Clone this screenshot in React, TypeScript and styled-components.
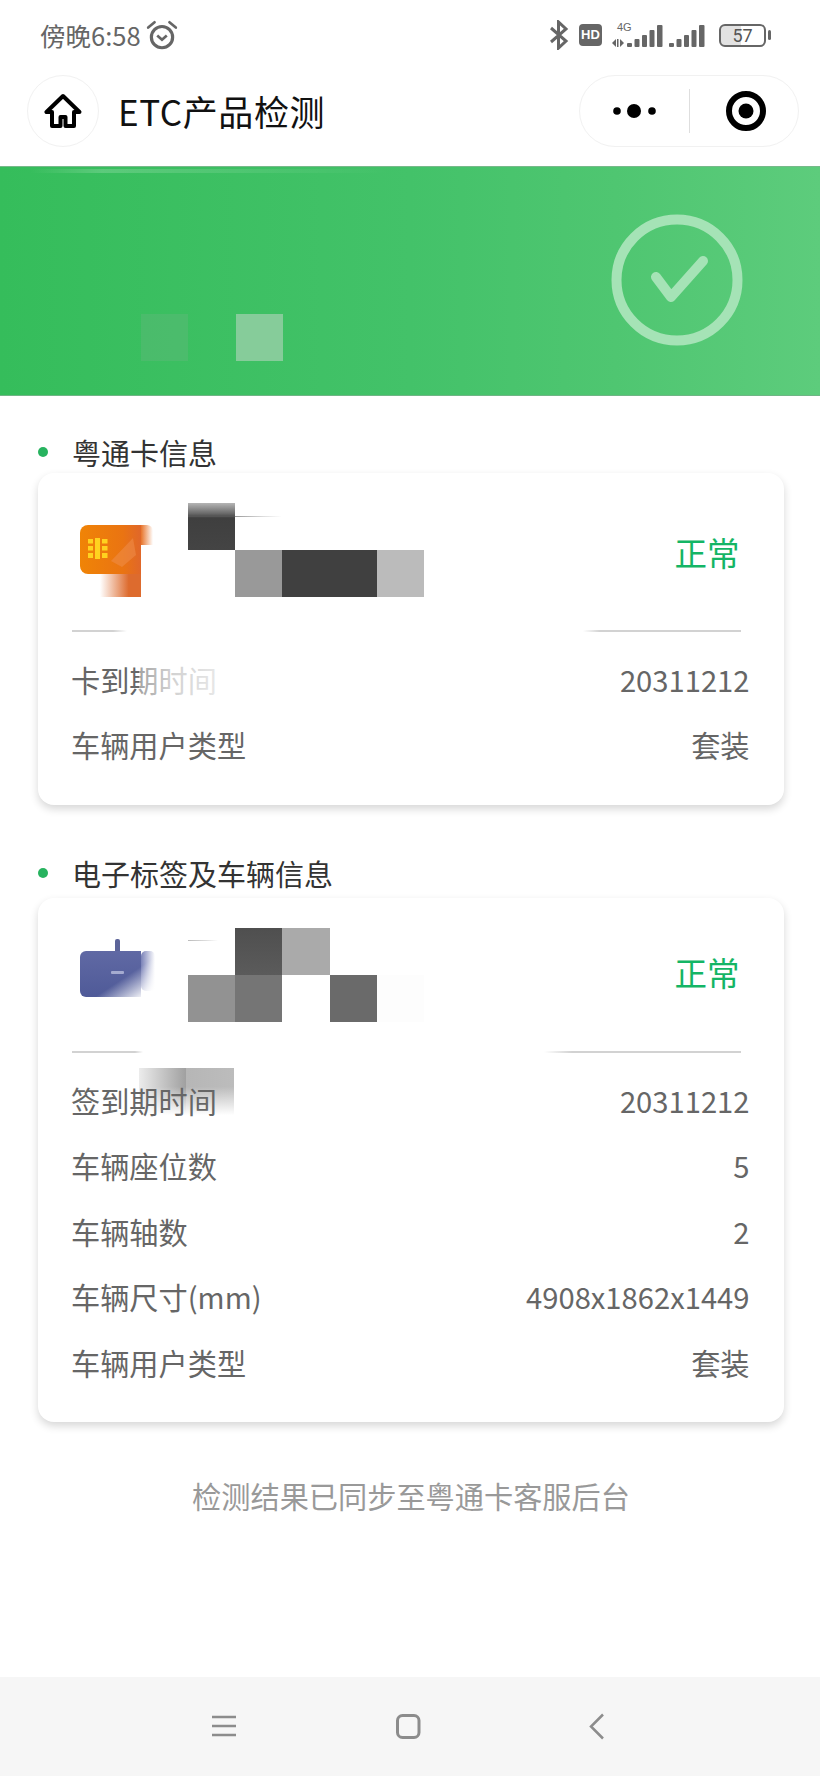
import React from "react";
import styled, { createGlobalStyle } from "styled-components";

const Global = createGlobalStyle`
  html, body { margin: 0; padding: 0; background: #fff; }
  body { font-family: "Noto Sans CJK SC", "Noto Sans", sans-serif; }
  * { box-sizing: border-box; }
`;

const Page = styled.div`
  width: 820px;
  height: 1776px;
  overflow: hidden;
  display: flex;
  flex-direction: column;
  background: #fff;
`;

const StatusBar = styled.div`
  height: 70px;
  padding: 0 54px 0 40px;
  display: flex;
  align-items: center;
  color: #666;
`;

const Clock = styled.span`
  font-size: 25.500px;
  line-height: 30px;
  font-family: "Noto Sans CJK SC", sans-serif;
`;

const AlarmIcon = styled.svg`
  width: 34px;
  height: 34px;
  margin-left: 4px;
`;

const StatusIcons = styled.div`
  margin-left: auto;
  display: flex;
  align-items: center;
`;

const BluetoothIcon = styled.svg`
  width: 20px;
  height: 30px;
`;

const HdBadge = styled.span`
  width: 23px;
  height: 22px;
  margin-left: 10px;
  border-radius: 4px;
  background: #666;
  color: #fff;
  font: 700 13px/22px "Liberation Sans", sans-serif;
  text-align: center;
`;

const SignalWrap = styled.div`
  position: relative;
  width: 51px;
  height: 26px;
  margin-left: 10px;
`;

const FourG = styled.span`
  position: absolute;
  left: 5px;
  top: -1px;
  font: 400 11px/12px "Liberation Sans", sans-serif;
  color: #666;
`;

const SignalIcon = styled.svg<{ $w: number }>`
  display: block;
  width: ${(p) => p.$w}px;
  height: 26px;
`;

const SecondSignal = styled.div`
  margin-left: 6px;
`;

const Battery = styled.div`
  position: relative;
  width: 47px;
  height: 23px;
  margin-left: 14px;
  border: 2px solid #666;
  border-radius: 6px;
  font: 400 18px/19px "Roboto", sans-serif;
  color: #555;
  text-align: center;
  background: linear-gradient(90deg, #e2e2e2 0 20px, transparent 20px);
  &::after {
    content: "";
    position: absolute;
    right: -7px;
    top: 4px;
    width: 3px;
    height: 10px;
    border-radius: 2px;
    background: #666;
  }
`;

const NavBar = styled.div`
  height: 96px;
  padding: 5px 21px 19px 27px;
  display: flex;
  align-items: center;
`;

const HomeButton = styled.div`
  width: 72px;
  height: 72px;
  border: 1px solid #f1f1f1;
  border-radius: 50%;
  display: flex;
  align-items: center;
  justify-content: center;
`;

const HomeIcon = styled.svg`
  width: 38px;
  height: 36px;
`;

const Title = styled.h1`
  margin: 0 0 0 19px;
  font-size: 35px;
  line-height: 44px;
  font-weight: 400;
  letter-spacing: 0.6px;
  color: #111;
`;

const Capsule = styled.div`
  margin-left: auto;
  width: 220px;
  height: 72px;
  border: 1px solid #f1f1f1;
  border-radius: 36px;
  display: flex;
  align-items: center;
`;

const CapsuleIcon = styled.svg<{ $w: number; $ml: number }>`
  width: ${(p) => p.$w}px;
  height: 44px;
  margin-left: ${(p) => p.$ml}px;
`;

const CapsuleLine = styled.div`
  width: 1px;
  height: 44px;
  margin-left: 32px;
  background: #dedede;
`;

const Banner = styled.div`
  height: 230px;
  position: relative;
  padding: 0 77px 0 141px;
  display: flex;
  align-items: flex-end;
  background: linear-gradient(90deg, #35bd5b 0%, #43c269 50%, #4fc671 75%, #5dcc7c 100%);
  border-top: 1px solid #77b98a;
  border-bottom: 1px solid #6fb585;
  &::before {
    content: "";
    position: absolute;
    left: 30px;
    top: 2px;
    width: 360px;
    height: 4px;
    background: linear-gradient(90deg, rgba(255,255,255,0), rgba(255,255,255,.18) 20%, rgba(255,255,255,0));
  }
`;

const BannerBlock = styled.div<{ $bg: string; $ml: number }>`
  width: 47px;
  height: 47px;
  margin: 0 0 34px ${(p) => p.$ml}px;
  background: ${(p) => p.$bg};
`;

const ResultRing = styled.svg`
  width: 132px;
  height: 132px;
  margin: 0 0 49px auto;
`;

const Content = styled.main`
  padding: 36px 36px 0 38px;
`;

const SectionTitle = styled.h2<{ $mb: number }>`
  margin: 0 0 ${(p) => p.$mb}px;
  height: 40px;
  display: flex;
  align-items: center;
  font-size: 29px;
  line-height: 40px;
  font-weight: 400;
  color: #333;
  &::before {
    content: "";
    width: 10px;
    height: 10px;
    margin-right: 24px;
    border-radius: 50%;
    background: #27b35f;
  }
`;

const Card = styled.section<{ $h: number; $mb: number }>`
  height: ${(p) => p.$h}px;
  margin-bottom: ${(p) => p.$mb}px;
  padding: 0 34.5px 0 33px;
  border-radius: 16px;
  background: #fff;
  box-shadow: 0 4px 9px rgba(0, 0, 0, 0.16);
`;

const CardHead = styled.div<{ $h: number; $pt: number }>`
  height: ${(p) => p.$h}px;
  padding-top: ${(p) => p.$pt}px;
  display: flex;
  align-items: flex-start;
`;

const DeviceIcon = styled.svg`
  width: 80px;
  height: 94px;
  margin-left: 9px;
  flex: none;
`;

const Mosaic = styled.div`
  margin-left: 28px;
  display: grid;
  grid-template-columns: repeat(5, 47.2px);
  grid-auto-rows: 47px;
`;

const Pixel = styled.div<{ $bg: string }>`
  background: ${(p) => p.$bg};
`;

const StatusText = styled.div<{ $mt: number }>`
  margin: ${(p) => p.$mt}px 10px 0 auto;
  font-size: 32.500px;
  line-height: 44px;
  color: #14b565;
`;

const Divider = styled.div<{ $solid: number; $left: number; $right: number; $full: number }>`
  height: 2px;
  margin: 0 8.500px 0 1px;
  background: linear-gradient(
    90deg,
    #d2d2d2 0,
    #d2d2d2 ${(p) => p.$solid}px,
    rgba(210, 210, 210, 0) ${(p) => p.$left}px,
    rgba(210, 210, 210, 0) ${(p) => p.$right}px,
    #d2d2d2 ${(p) => p.$full}px,
    #d2d2d2 100%
  );
`;

const Rows = styled.div`
  padding-top: 14px;
`;

const Row = styled.div`
  height: 65.5px;
  display: flex;
  align-items: center;
  justify-content: space-between;
  font-size: 29.200px;
  line-height: 40px;
  color: #666;
`;

const Label = styled.span`
  position: relative;
  z-index: 0;
`;

const LabelFade = styled.i`
  position: absolute;
  left: 68px;
  top: 0;
  width: 80px;
  height: 100%;
  background: linear-gradient(90deg, rgba(255,255,255,.4) 0%, rgba(255,255,255,.7) 40%, rgba(255,255,255,.85) 100%);
`;

const LabelMosaic = styled.i`
  position: absolute;
  z-index: -1;
  left: 68px;
  top: -12px;
  width: 95px;
  height: 47px;
  background:
    linear-gradient(180deg, rgba(255,255,255,0) 40%, #fff 100%),
    linear-gradient(90deg, #ececec 0%, #a0a0a0 49.500%, #b6b6b6 49.500%, #bcbcbc 100%);
`;

const Footer = styled.p`
  margin: 0;
  padding-top: 53px;
  text-align: center;
  font-size: 29.200px;
  line-height: 40px;
  color: #999;
`;

const BottomBar = styled.nav`
  margin-top: auto;
  height: 99px;
  background: #f6f6f6;
  padding: 36px 0 0 212px;
  display: flex;
  align-items: flex-start;
`;

const BarIcon = styled.svg<{ $w: number; $ml: number }>`
  width: ${(p) => p.$w}px;
  height: 27px;
  margin-left: ${(p) => p.$ml}px;
`;

const Chip = () => (
  <g fill="#ffd21f">
    <rect x="8" y="14" width="5" height="4.500" />
    <rect x="8" y="21" width="5" height="4.500" />
    <rect x="8" y="28" width="5" height="5" />
    <rect x="15" y="13" width="5" height="21" />
    <rect x="22" y="14" width="5.500" height="4.500" />
    <rect x="22" y="21" width="5.500" height="4.500" />
    <rect x="22" y="28" width="5.500" height="5" />
  </g>
);

const OrangeCard = () => (
  <DeviceIcon viewBox="0 0 80 94">
    <defs>
      <linearGradient id="oFade" x1="0" x2="1" y1="0" y2="0">
        <stop offset="0" stopColor="#dd6b2e" stopOpacity="0" />
        <stop offset="0.7" stopColor="#dd6b2e" />
      </linearGradient>
      <linearGradient id="oTop" x1="0" x2="1" y1="0" y2="0">
        <stop offset="0" stopColor="#f08406" />
        <stop offset="0.7" stopColor="#ea7412" />
        <stop offset="1" stopColor="#e0672a" />
      </linearGradient>
      <linearGradient id="oEdge" x1="0" x2="1" y1="0" y2="0">
        <stop offset="0" stopColor="#e8742a" />
        <stop offset="1" stopColor="#e8742a" stopOpacity="0" />
      </linearGradient>
    </defs>
    <rect x="20" y="48" width="41" height="46" fill="url(#oFade)" />
    <path d="M8 22h53v49H8a8 8 0 0 1-8-8V30a8 8 0 0 1 8-8z" fill="url(#oTop)" />
    <path d="M61 22h6a6 6 0 0 1 6 6v14H61z" fill="url(#oEdge)" />
    <g transform="translate(0 22)">
      <Chip />
      <path d="M31 36 L53 13 L56 30 L42 42 Z" fill="#f09050" opacity="0.5" />
    </g>
  </DeviceIcon>
);

const BlueDevice = () => (
  <DeviceIcon viewBox="0 0 80 94">
    <defs>
      <linearGradient id="bBody" x1="0" x2="0" y1="0" y2="1">
        <stop offset="0" stopColor="#6069a4" />
        <stop offset="1" stopColor="#4f5a98" />
      </linearGradient>
      <linearGradient id="bFade" x1="0.2" x2="1" y1="0.2" y2="1">
        <stop offset="0.45" stopColor="#fff" stopOpacity="0" />
        <stop offset="0.85" stopColor="#fff" stopOpacity="0.95" />
      </linearGradient>
      <linearGradient id="bEdge" x1="0" x2="1" y1="0" y2="0">
        <stop offset="0" stopColor="#7a82b8" />
        <stop offset="1" stopColor="#7a82b8" stopOpacity="0" />
      </linearGradient>
    </defs>
    <rect x="35" y="11" width="5" height="14" rx="2" fill="#5c6499" />
    <path d="M6 23h55v46H6a6 6 0 0 1-6-6V29a6 6 0 0 1 6-6z" fill="url(#bBody)" />
    <rect x="61" y="23" width="14" height="40" rx="5" fill="url(#bEdge)" />
    <rect x="31" y="43" width="13" height="3" rx="1" fill="#a5abd0" />
    <rect x="0" y="23" width="75" height="50" fill="url(#bFade)" />
  </DeviceIcon>
);

export default function App() {
  return (
    <Page>
      <Global />
      <StatusBar>
        <Clock>傍晚6:58</Clock>
        <AlarmIcon viewBox="0 0 32 32" fill="none" stroke="#666">
          <circle cx="16" cy="18" r="10" strokeWidth="3" />
          <path d="M11.500 16.500l4.500 4 4.500-4" strokeWidth="2.500" />
          <path d="M3 9l6-5M29 9l-6-5" strokeWidth="2.500" strokeLinecap="round" />
        </AlarmIcon>
        <StatusIcons>
          <BluetoothIcon viewBox="0 0 20 30" fill="none" stroke="#666" strokeWidth="3">
            <path d="M2 8l15 13-7.500 7V2L17 9 2 22" />
          </BluetoothIcon>
          <HdBadge>HD</HdBadge>
          <SignalWrap>
            <FourG>4G</FourG>
            <SignalIcon $w={51} viewBox="0 0 51 26" fill="#666">
              <path d="M0 21l4-4v8zM5 17h1.500v8H5zM8 17v8l4-4z" />
              <rect x="15" y="21" width="5" height="4" rx="1" />
              <rect x="22.500" y="17" width="5" height="8" rx="1" />
              <rect x="30" y="13" width="5" height="12" rx="1" />
              <rect x="37.500" y="8" width="5" height="17" rx="1" />
              <rect x="45" y="3" width="5.500" height="22" rx="1" />
            </SignalIcon>
          </SignalWrap>
          <SecondSignal>
            <SignalIcon $w={36} viewBox="0 0 36 26" fill="#666">
              <rect x="0" y="21" width="5" height="4" rx="1" />
              <rect x="7.500" y="17" width="5" height="8" rx="1" />
              <rect x="15" y="13" width="5" height="12" rx="1" />
              <rect x="22.500" y="8" width="5" height="17" rx="1" />
              <rect x="30" y="3" width="5.500" height="22" rx="1" />
            </SignalIcon>
          </SecondSignal>
          <Battery>57</Battery>
        </StatusIcons>
      </StatusBar>

      <NavBar>
        <HomeButton>
          <HomeIcon viewBox="0 0 38 36">
            <path
              d="M19 3L2.500 19H8v14h8.500v-9h5v9H30V19h5.500z"
              fill="none"
              stroke="#000"
              strokeWidth="4"
              strokeLinejoin="round"
            />
          </HomeIcon>
        </HomeButton>
        <Title>ETC产品检测</Title>
        <Capsule>
          <CapsuleIcon $w={44} $ml={33} viewBox="0 0 44 44" fill="#000">
            <circle cx="4" cy="22" r="3.800" />
            <circle cx="21" cy="22" r="7" />
            <circle cx="39" cy="22" r="3.800" />
          </CapsuleIcon>
          <CapsuleLine />
          <CapsuleIcon $w={44} $ml={34} viewBox="0 0 44 44">
            <circle cx="22" cy="22" r="17" fill="none" stroke="#000" strokeWidth="6" />
            <circle cx="22" cy="22" r="7.500" fill="#000" />
          </CapsuleIcon>
        </Capsule>
      </NavBar>

      <Banner>
        <BannerBlock $bg="rgba(120,180,135,.28)" $ml={0} />
        <BannerBlock $bg="#86cc9a" $ml={48} />
        <ResultRing viewBox="0 0 132 132" fill="none" stroke="#a5e3b6">
          <circle cx="66" cy="66" r="60.500" strokeWidth="10" />
          <path d="M45 63l15 20 32-36" strokeWidth="10" strokeLinecap="round" strokeLinejoin="round" />
        </ResultRing>
      </Banner>

      <Content>
        <SectionTitle $mb={1}>粤通卡信息</SectionTitle>
        <Card $h={332} $mb={48}>
          <CardHead $h={157} $pt={30}>
            <OrangeCard />
            <Mosaic>
              <Pixel $bg="linear-gradient(#555,#555) 0 13px/100% 1px no-repeat, linear-gradient(180deg,#b5b5b5 0%,#6b6b6b 22%,#3f3f3f 32%,#444 100%)" />
              <Pixel $bg="linear-gradient(90deg,#999,#ddd 60%,transparent) 0 13px/100% 1px no-repeat" />
              <Pixel $bg="transparent" />
              <Pixel $bg="transparent" />
              <Pixel $bg="transparent" />
              <Pixel $bg="transparent" />
              <Pixel $bg="#999" />
              <Pixel $bg="#404040" />
              <Pixel $bg="#404040" />
              <Pixel $bg="#bbb" />
            </Mosaic>
            <StatusText $mt={27}>正常</StatusText>
          </CardHead>
          <Divider $solid={41} $left={55} $right={511} $full={528} />
          <Rows>
            <Row>
              <Label>
                卡到期时间
                <LabelFade />
              </Label>
              <span>20311212</span>
            </Row>
            <Row>
              <Label>车辆用户类型</Label>
              <span>套装</span>
            </Row>
          </Rows>
        </Card>

        <SectionTitle $mb={5}>电子标签及车辆信息</SectionTitle>
        <Card $h={524} $mb={0}>
          <CardHead $h={153} $pt={30}>
            <BlueDevice />
            <Mosaic>
              <Pixel $bg="linear-gradient(90deg,#bbb,#ddd 60%,transparent) 0 12px/30px 1px no-repeat" />
              <Pixel $bg="linear-gradient(180deg,#4f4f4f,#5b5b5b)" />
              <Pixel $bg="#aaa" />
              <Pixel $bg="transparent" />
              <Pixel $bg="transparent" />
              <Pixel $bg="#929292" />
              <Pixel $bg="#757575" />
              <Pixel $bg="transparent" />
              <Pixel $bg="#6a6a6a" />
              <Pixel $bg="#fdfdfd" />
            </Mosaic>
            <StatusText $mt={22}>正常</StatusText>
          </CardHead>
          <Divider $solid={63} $left={71} $right={472} $full={500} />
          <Rows>
            <Row>
              <Label>
                签到期时间
                <LabelMosaic />
              </Label>
              <span>20311212</span>
            </Row>
            <Row>
              <Label>车辆座位数</Label>
              <span>5</span>
            </Row>
            <Row>
              <Label>车辆轴数</Label>
              <span>2</span>
            </Row>
            <Row>
              <Label>车辆尺寸(mm)</Label>
              <span>4908x1862x1449</span>
            </Row>
            <Row>
              <Label>车辆用户类型</Label>
              <span>套装</span>
            </Row>
          </Rows>
        </Card>
        <Footer>检测结果已同步至粤通卡客服后台</Footer>
      </Content>

      <BottomBar>
        <BarIcon $w={24} $ml={0} viewBox="0 0 24 27" stroke="#8c8c8c" strokeWidth="2.500">
          <path d="M0 4h24M0 13h24M0 22h24" />
        </BarIcon>
        <BarIcon $w={26} $ml={160} viewBox="0 0 26 27" fill="none" stroke="#8c8c8c" strokeWidth="3">
          <rect x="1.500" y="2.500" width="21.500" height="22" rx="5" />
        </BarIcon>
        <BarIcon $w={15} $ml={167} viewBox="0 0 15 27" fill="none" stroke="#8c8c8c" strokeWidth="2.500">
          <path d="M14 1.500L2 13.500l12 12" />
        </BarIcon>
      </BottomBar>
    </Page>
  );
}
